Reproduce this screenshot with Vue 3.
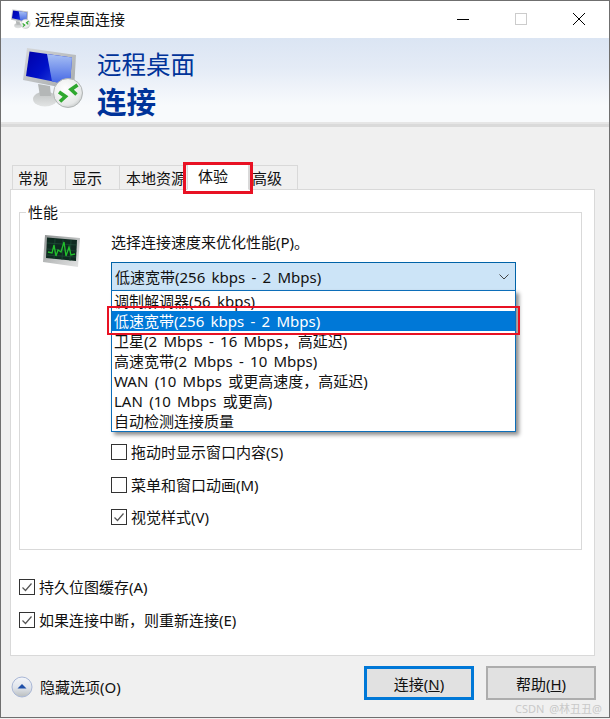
<script setup>
const tabs = ['常规', '显示', '本地资源', '体验', '高级']
const speeds = [
  '调制解调器(56 kbps)',
  '低速宽带(256 kbps - 2 Mbps)',
  '卫星(2 Mbps - 16 Mbps，高延迟)',
  '高速宽带(2 Mbps - 10 Mbps)',
  'WAN (10 Mbps 或更高速度，高延迟)',
  'LAN (10 Mbps 或更高)',
  '自动检测连接质量'
]
const inner = [
  { t: '拖动时显示窗口内容(S)', c: false },
  { t: '菜单和窗口动画(M)', c: false },
  { t: '视觉样式(V)', c: true }
]
const outer = [
  { t: '持久位图缓存(A)', c: true },
  { t: '如果连接中断，则重新连接(E)', c: true }
]
</script>

<template>
  <div class="window">
    <header class="titlebar">
      <svg class="title-icon" viewBox="23 47 62 62"><use href="#rdp-logo" /></svg>
      <span class="title-text">远程桌面连接</span>
      <div class="controls">
        <svg width="12" height="12" viewBox="0 0 12 12"><path d="M0 6.5H12" stroke="#000" fill="none" /></svg>
        <svg width="12" height="12" viewBox="0 0 12 12"><rect x=".5" y=".5" width="11" height="11" stroke="#ccc" fill="none" /></svg>
        <svg width="12" height="12" viewBox="0 0 12 12"><path d="M0 0L12 12M12 0L0 12" stroke="#000" fill="none" /></svg>
      </div>
    </header>

    <section class="banner">
      <svg class="banner-icon" viewBox="23 47 62 62">
        <defs>
          <linearGradient id="scr" x1="0" y1="0" x2="1" y2=".6">
            <stop offset="0" stop-color="#0000a8" />
            <stop offset=".5" stop-color="#0010c8" />
            <stop offset="1" stop-color="#2a48e0" />
          </linearGradient>
          <linearGradient id="gloss" x1="0" y1="0" x2="0" y2="1">
            <stop offset="0" stop-color="#a8c0f4" />
            <stop offset="1" stop-color="#3f62e4" />
          </linearGradient>
          <linearGradient id="frm" x1="0" y1="0" x2="1" y2="1">
            <stop offset="0" stop-color="#d6d8da" />
            <stop offset="1" stop-color="#a4a8aa" />
          </linearGradient>
          <linearGradient id="std" x1="0" y1="0" x2="0" y2="1">
            <stop offset="0" stop-color="#bfc2c2" />
            <stop offset="1" stop-color="#e2e4e4" />
          </linearGradient>
          <radialGradient id="glb" cx=".4" cy=".35" r=".8">
            <stop offset="0" stop-color="#ffffff" />
            <stop offset=".7" stop-color="#e6e8e8" />
            <stop offset="1" stop-color="#aeb2b2" />
          </radialGradient>
          <g id="rdp-logo">
            <ellipse cx="45" cy="99" rx="12" ry="7.500" fill="url(#std)" />
            <path d="M38 84L50 86L51 96H40Z" fill="#b4b7b7" />
            <path d="M27 48L76 55L74 90L23 80Z" fill="url(#frm)" />
            <path d="M29.500 51.500L72 57.500L70 85L26 76Z" fill="url(#scr)" />
            <path d="M47 54L72 57.500L70 85L52 81.500Z" fill="url(#gloss)" />
            <circle cx="68" cy="93" r="14.500" fill="url(#glb)" stroke="#b0b4b4" />
            <path d="M59 92L65.500 96.500L60 101.500" fill="none" stroke="#2fa82f" stroke-width="3.600" />
            <path d="M77.500 85L71 89.500L76.500 94.500" fill="none" stroke="#2fa82f" stroke-width="3.600" />
          </g>
        </defs>
        <use href="#rdp-logo" />
      </svg>
      <div class="banner-text">
        <div class="banner-top">远程桌面</div>
        <div class="banner-bold">连接</div>
      </div>
    </section>
    <div class="stripe"></div>

    <main class="body">
      <nav class="tabs">
        <div v-for="(t, i) in tabs" :key="t" class="tab" :class="{ active: i === 3 }">{{ t }}</div>
        <div class="tab-mark"></div>
      </nav>

      <div class="panel">
        <fieldset class="group">
          <legend class="legend">性能</legend>
          <div class="perf">
            <svg class="perf-icon" viewBox="0 0 38 34">
              <defs>
                <linearGradient id="bez" x1="0" y1="0" x2="1" y2="1">
                  <stop offset="0" stop-color="#8e9292" />
                  <stop offset=".6" stop-color="#c4c6c6" />
                  <stop offset="1" stop-color="#e4e5e5" />
                </linearGradient>
              </defs>
              <path d="M2 1L37 4L35 33L0 28Z" fill="url(#bez)" />
              <path d="M4 3.500L34 6L33 27L3 24Z" fill="#0e2a20" />
              <path d="M4 9L33.800 11M4 15L33.500 17M3.500 21L33 23M12 5L11 25M20 5.500L19 26M28 6L27 27" stroke="#1f4f3a" fill="none" stroke-width=".7" />
              <path d="M5 18L9 19L11 11L13 22L15 16L18 18L21 8L23 22L26 13L28 21L32 20" fill="none" stroke="#22c02c" stroke-width="1.300" />
            </svg>
            <div class="perf-main">
              <div class="prompt">选择连接速度来优化性能(P)。</div>
              <div class="combo-wrap">
                <div class="combo">
                  <span>低速宽带(256 kbps - 2 Mbps)</span>
                  <svg width="10" height="6" viewBox="0 0 10 6"><path d="M.5 .5L5 5L9.500 .5" fill="none" stroke="#444" /></svg>
                </div>
                <ul class="drop">
                  <li v-for="(s, i) in speeds" :key="s" :class="{ sel: i === 1 }">{{ s }}</li>
                </ul>
                <div class="row-mark"></div>
              </div>
              <div class="checks inner">
                <label v-for="o in inner" :key="o.t" class="check">
                  <span class="box">
                    <svg v-if="o.c" width="12" height="12" viewBox="0 0 12 12"><path d="M1.500 6.500L4.500 9.500L10.500 2.500" fill="none" stroke="#555" stroke-width="1.200" /></svg>
                  </span>
                  {{ o.t }}
                </label>
              </div>
            </div>
          </div>
        </fieldset>
        <div class="checks outer">
          <label v-for="o in outer" :key="o.t" class="check">
            <span class="box">
              <svg v-if="o.c" width="12" height="12" viewBox="0 0 12 12"><path d="M1.500 6.500L4.500 9.500L10.500 2.500" fill="none" stroke="#555" stroke-width="1.200" /></svg>
            </span>
            {{ o.t }}
          </label>
        </div>
      </div>

      <footer class="footer">
        <div class="toggle">
          <svg width="22" height="22" viewBox="0 0 22 22">
            <defs>
              <linearGradient id="tg" x1="0" y1="0" x2="0" y2="1">
                <stop offset="0" stop-color="#f4f6fa" />
                <stop offset=".55" stop-color="#dfe3ea" />
                <stop offset="1" stop-color="#b9bdbd" />
              </linearGradient>
            </defs>
            <circle cx="11" cy="11" r="10" fill="url(#tg)" stroke="#a9b7d6" />
            <path d="M6.500 12.500L11 8L15.500 12.500Z" fill="#1f4fa8" />
          </svg>
          <span>隐藏选项(O)</span>
        </div>
        <button class="btn primary">连接(<u>N</u>)</button>
        <button class="btn">帮助(<u>H</u>)</button>
      </footer>
      <div class="watermark">CSDN @林丑丑@</div>
    </main>
  </div>
</template>

<style>
html, body { margin: 0; padding: 0; background: #f0f0f0; }
</style>

<style scoped>
.window {
  width: 610px;
  height: 718px;
  box-sizing: border-box;
  border: 1px solid #6f6f6f;
  display: flex;
  flex-direction: column;
  background: #f0f0f0;
  font-family: "Noto Sans", "Noto Sans CJK SC", sans-serif;
  font-size: 15px;
  color: #111;
  position: relative;
  overflow: hidden;
}
.titlebar {
  height: 37px;
  background: #fff;
  display: flex;
  align-items: center;
  padding: 0 0 2px 10px;
  box-sizing: border-box;
  flex: none;
}
.title-icon { width: 20px; height: 20px; margin-right: 4px; }
.title-text { font-size: 15px; }
.controls {
  margin-left: auto;
  display: flex;
  gap: 46px;
  padding-right: 24px;
  align-items: center;
}
.banner {
  height: 84px;
  flex: none;
  background: linear-gradient(#dbe5f3 0%, #e4ebf6 35%, #f8fafc 80%, #f8fafc 100%);
  display: flex;
  align-items: flex-start;
  padding: 9px 0 0 22px;
  box-sizing: border-box;
}
.banner-icon { width: 62px; height: 62px; margin-right: 12px; filter: blur(.35px); }
.banner-text { color: #003399; }
.banner-top { font-size: 24.500px; line-height: 34px; margin-top: 1px; }
.banner-bold { font-size: 29.500px; font-weight: 700; line-height: 38px; margin-top: 1px; }
.stripe {
  height: 5px;
  flex: none;
  background: #dadada;
  border-top: 2px solid #e6e6e6;
  box-sizing: border-box;
}
.body {
  flex: 1;
  padding: 38px 0 0 9px;
  position: relative;
  min-height: 0;
}
.tabs {
  display: flex;
  align-items: flex-end;
  height: 25px;
  padding-left: 2px;
  position: relative;
  z-index: 2;
  margin-bottom: -1px;
}
.tab {
  height: 25px;
  box-sizing: border-box;
  border: 1px solid #d9d9d9;
  border-right: none;
  background: #f0f0f0;
  padding-left: 5px;
  line-height: 24px;
  white-space: nowrap;
  overflow: hidden;
}
.tab:nth-child(1) { width: 53px; }
.tab:nth-child(2) { width: 54px; padding-left: 6px; }
.tab:nth-child(3) { width: 68px; padding-left: 6px; }
.tab:nth-child(4) { width: 62px; }
.tab:nth-child(5) { width: 49px; border-right: 1px solid #d9d9d9; padding-left: 2px; }
.tab.active {
  height: 28px;
  background: #fff;
  border-bottom-color: #fff;
  border-right: 1px solid #d9d9d9;
  padding-left: 10px;
  line-height: 26px;
}
.tab-mark {
  position: absolute;
  left: 173px;
  top: -3px;
  width: 70px;
  height: 32px;
  border: 3px solid #e81123;
  box-sizing: border-box;
}
.panel {
  width: 585px;
  height: 467px;
  box-sizing: border-box;
  background: #fff;
  border: 1px solid #d9d9d9;
  padding: 0 8px;
  position: relative;
}
.group {
  margin: 13px 0 0;
  padding: 0;
  width: 563px;
  height: 347px;
  box-sizing: border-box;
  border: 1px solid #d9d9d9;
}
.legend {
  margin-left: 6px;
  padding: 0 2px;
  line-height: 18px;
}
.perf { display: flex; align-items: flex-start; }
.perf-icon { width: 38px; height: 34px; margin: 13px 30px 0 23px; flex: none; }
.perf-main { flex: 1; }
.prompt { line-height: 20px; margin-top: 11px; }
.combo-wrap {
  position: relative;
  width: 405px;
  height: 172px;
  margin-top: 10px;
  word-spacing: 2.400px;
}
.combo {
  height: 29px;
  box-sizing: border-box;
  border: 1px solid #0063a8;
  background: #cce4f7;
  display: flex;
  align-items: center;
  justify-content: space-between;
  padding: 0 6px 0 3px;
}
.drop {
  position: absolute;
  left: 0;
  top: 28px;
  width: 405px;
  box-sizing: border-box;
  margin: 0;
  padding: 0;
  list-style: none;
  border: 1px solid #0c6eb9;
  background: #fff;
  box-shadow: 3px 3px 4px rgba(0, 0, 0, .45);
}
.drop li {
  height: 20px;
  line-height: 20px;
  padding-left: 2px;
  white-space: nowrap;
}
.drop li.sel { background: #0078d7; color: #fff; }
.row-mark {
  position: absolute;
  left: -4px;
  top: 44px;
  width: 413px;
  height: 29px;
  border: 2.500px solid #e81123;
  box-sizing: border-box;
}
.checks { display: flex; flex-direction: column; }
.checks.inner { margin-top: 8px; gap: 12.500px; }
.checks.outer { margin-top: 27px; gap: 12.500px; }
.check {
  display: flex;
  align-items: center;
  height: 20px;
  line-height: 20px;
  white-space: nowrap;
}
.box {
  width: 16px;
  height: 16px;
  box-sizing: border-box;
  border: 1px solid #333;
  background: #fff;
  margin-right: 4px;
  display: flex;
  align-items: center;
  justify-content: center;
  flex: none;
}
.footer {
  display: flex;
  align-items: center;
  margin-top: 10px;
  height: 34px;
}
.toggle {
  display: flex;
  align-items: center;
  gap: 7px;
  width: 354px;
  padding-left: 1px;
  box-sizing: border-box;
  margin-top: 7px;
}
.btn {
  width: 110px;
  height: 34px;
  box-sizing: border-box;
  margin: 0 12px 0 0;
  padding: 0;
  border: 2px solid #adadad;
  background: #e1e1e1;
  font: inherit;
  color: #111;
}
.btn.primary { border: 3px solid #0078d7; }
.watermark {
  position: absolute;
  right: 7px;
  bottom: 0;
  font-size: 11px;
  line-height: 16px;
  word-spacing: 2px;
  color: #c9c9c9;
}
</style>
